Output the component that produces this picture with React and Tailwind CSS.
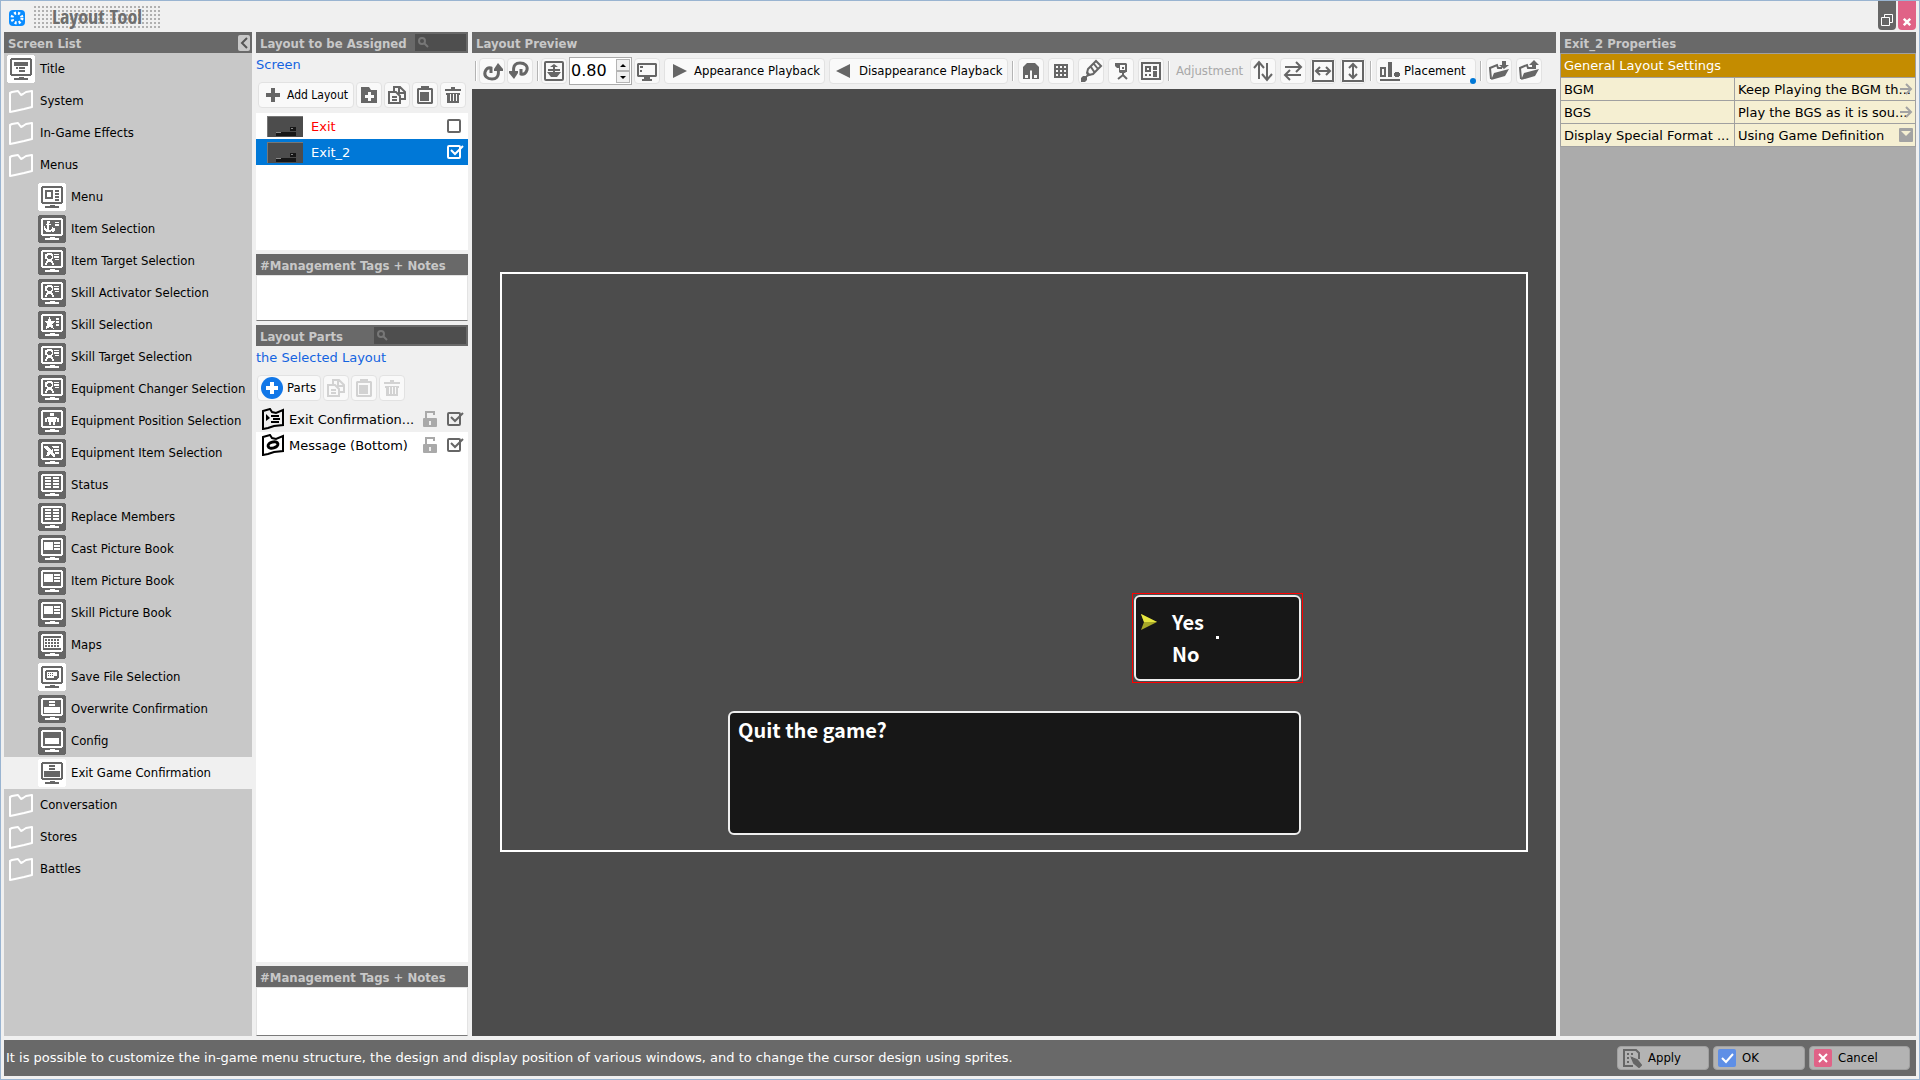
import React, { useState } from "react";

const SCREENS = [
  { name: "Title", kind: "title", light: true },
  { name: "System" },
  { name: "In-Game Effects" },
  { name: "Menus" },
  { name: "Menu", kind: "menu", light: true, child: true },
  { name: "Item Selection", kind: "anchor", child: true },
  { name: "Item Target Selection", kind: "person", child: true },
  { name: "Skill Activator Selection", kind: "person", child: true },
  { name: "Skill Selection", kind: "star", child: true },
  { name: "Skill Target Selection", kind: "person", child: true },
  { name: "Equipment Changer Selection", kind: "person", child: true },
  { name: "Equipment Position Selection", kind: "body", child: true },
  { name: "Equipment Item Selection", kind: "sword", child: true },
  { name: "Status", kind: "columns", child: true },
  { name: "Replace Members", kind: "columns", child: true },
  { name: "Cast Picture Book", kind: "book", child: true },
  { name: "Item Picture Book", kind: "book", child: true },
  { name: "Skill Picture Book", kind: "book", child: true },
  { name: "Maps", kind: "map", child: true },
  { name: "Save File Selection", kind: "save", light: true, child: true },
  { name: "Overwrite Confirmation", kind: "confirm", child: true },
  { name: "Config", kind: "config", child: true },
  { name: "Exit Game Confirmation", kind: "confirm", light: true, child: true },
  { name: "Conversation" },
  { name: "Stores" },
  { name: "Battles" },
];

// Drawings shown inside the monitor, on a 28x28 grid
const GLYPHS = {
  title: <path d="M7 7h14v4H7zM9 12h2v2H9zM12 12h6v2h-6zM12 15h6v2h-6z" />,
  menu: <path fillRule="evenodd" d="M7 7h8v9H7zM9 9v5h4V9zM17 7h4v2h-4zM17 10h4v2h-4zM17 13h4v2h-4zM17 16h4v2h-4z" />,
  anchor: <path d="M9 6h3v2h-1v1h2v1h-2v5h2v-1h1v-2h1v1h2v3h-1v1h-2v-1h-1v1H8v-1H7v-1H6v-4h1v2h1v1h1v-4H8V9h1zM17 7h4v1h-4zM17 9h4v2h-4z" />,
  person: <path fillRule="evenodd" d="M9 6h5v1h1v5h-1v2h1v2h1v2h-2v-2h-1v-1h-3v1H9v2H7v-2h1v-2h1v-2H7V7h2zM10 8v1H9v2h1v1h3v-1h1V9h-1V8zM16 7h5v1h-5zM16 9h5v2h-5zM17 12h4v1h-4z" />,
  star: <path d="M11 6h1l1 4h4l-3 3 2 5-4-2-4 2 1-5-3-3h4zM18 7h3v2h-3zM18 10h3v2h-3zM18 13h3v2h-3z" />,
  body: <path d="M12 6h4v3h-4zM9 10h10v1h2v4h-2v-3h-1v3h-8v-3H9v3H7v-4h2zM11 15h2v3h-2zM15 15h2v3h-2z" />,
  sword: <path d="M6 7h3l4 4 2-1v2l-1 1 3 3v2h-2l-3-3-2 2H8l1-2-1-1 2-1-4-4zM14 7h7v2h-6zM16 10h5v2h-5zM17 13h4v2h-4z" />,
  columns: <path d="M7 6h6v2H7zM7 9h6v2H7zM7 12h6v2H7zM7 15h6v2H7zM15 6h6v2h-6zM15 9h6v2h-6zM15 12h6v2h-6zM15 15h6v2h-6z" />,
  book: <path d="M6 7h9v8H6zM16 7h6v2h-6zM16 10h6v2h-6zM16 13h6v2h-6z" />,
  map: <path fillRule="evenodd" d="M6 7h17v10H6zM7 8v2h2V8zM10 8v2h2V8zM13 8v2h2V8zM16 8v2h2V8zM19 8v2h2V8zM7 11v2h2v-2zM10 11v2h2v-2zM13 11v2h2v-2zM16 11v2h2v-2zM19 11v2h2v-2zM7 14v2h2v-2zM10 14v2h2v-2zM13 14v2h2v-2zM16 14v2h2v-2zM19 14v2h2v-2z" />,
  save: <path fillRule="evenodd" d="M8 7h12v1h1v6l-3 3H8v-1H7V8h1zM9 9v6h7v-2h3V9zM10 10h1v1h-1zM12 10h1v1h-1zM14 10h1v1h-1zM10 12h1v1h-1zM12 12h1v1h-1zM14 12h1v1h-1z" />,
  confirm: <path d="M11 6h6v2h-6zM11 9h6v2h-6zM6 12h16v6H6z" />,
  config: <path d="M7 11h14v6H7z" />,
};

function MonitorIcon({ kind, light }) {
  return (
    <svg viewBox="0 0 28 28" className="size-7 shrink-0" shapeRendering="crispEdges" aria-hidden="true">
      <rect width="28" height="28" rx="3" fill={light ? "#fff" : "#666"} />
      <g fill={light ? "#666" : "#fff"}>
        <path fillRule="evenodd" d="M4 3h20v1h1v16h-1v1H4v-1H3V4h1zM5 5v14h18V5zM12 22h5v1h4v2H7v-2h5z" />
        {GLYPHS[kind]}
      </g>
    </svg>
  );
}

function FolderIcon() {
  return (
    <svg viewBox="0 0 28 28" className="size-7 shrink-0" aria-hidden="true">
      <path d="M3 6l2-1 6-1 3 4 2-1 3-2 6-1v16l-8 2-9 2-5 1z" fill="none" stroke="#fff" strokeWidth="2" strokeLinejoin="round" />
    </svg>
  );
}

// Toolbar icons, all on a 24x24 grid
const ICONS = {
  plus: <path d="M10 5h4v5h5v4h-5v5h-4v-5H5v-4h5z" />,
  addFolder: <path fillRule="evenodd" d="M4 4h8l2 3h6v13H4zM11 9v3H8v3h3v3h3v-3h3v-3h-3V9z" />,
  copy: (
    <g fill="none" stroke="currentColor" strokeWidth="2">
      <path d="M9 8V4h6l5 5v7h-4M14 4v6h6" />
      <path d="M4 9h7l4 4v7H4zM7 14h5M7 17h5" />
    </g>
  ),
  paste: <path fillRule="evenodd" d="M8 3h8v2h3l1 1v14l-1 1H5l-1-1V6l1-1h3zM6 7v12h12V7zM8 9h8v9H7V9z" />,
  trash: <path fillRule="evenodd" d="M10 4h4v2h6v2H4V6h6zM5 10h14v2h-1v8H6v-8H5zM9 11v7h1v-7zM12 11v7h1v-7zM15 11v7h1v-7z" />,
  redo: (
    <g>
      <path d="M18 9C20 19 15 20 12 20 7 20 4 17 5 13c1-3 3-5 6-4v5" fill="none" stroke="currentColor" strokeWidth="3" />
      <path d="M18 4l5 6v2h-9v-2z" />
    </g>
  ),
  undo: (
    <g transform="rotate(180 12 12)">
      <path d="M18 9C20 19 15 20 12 20 7 20 4 17 5 13c1-3 3-5 6-4v5" fill="none" stroke="currentColor" strokeWidth="3" />
      <path d="M18 4l5 6v2h-9v-2z" />
    </g>
  ),
  anchorBox: (
    <g>
      <rect x="3" y="3" width="18" height="18" rx="1" fill="none" stroke="currentColor" strokeWidth="2" />
      <path d="M12 5l4 3h-3v2h5v2h-5v1h6l-4 5h-6l-4-5h6v-1H6v-2h5V8H8z" />
    </g>
  ),
  screen: <path fillRule="evenodd" d="M3 4h18l1 1v12l-1 1h-6v2h2v2H7v-2h2v-2H3l-1-1V5zM4 6v10h16V6zM5 7h3v2H5zM5 11h2v2H5z" />,
  right: <path d="M5 5l14 7-14 7z" />,
  left: <path d="M19 5v14L5 12z" />,
  magnet: <path fillRule="evenodd" d="M8 4h8l4 4v12h-7v-8l-1-1-1 1v8H4V8zM6 16v3h3v-3zM15 16v3h3v-3z" />,
  grid: <path fillRule="evenodd" d="M5 5h14v14H5zM7 7v2h2V7zM11 7v2h2V7zM15 7v2h2V7zM7 11v2h2v-2zM11 11v2h2v-2zM15 11v2h2v-2zM7 15v2h2v-2zM11 15v2h2v-2zM15 15v2h2v-2z" />,
  brush: (
    <g>
      <path d="M8 14l1-4 8-8 5 5-8 8-4 1zM12 8l4 6M15 5l4 5" fill="none" stroke="currentColor" strokeWidth="2" />
      <path d="M9 13l3 3-4 2v3l-2 2H2v-4l2-2h3z" />
    </g>
  ),
  camera: (
    <g>
      <path fillRule="evenodd" d="M6 4h11l1 1v8h-1l-1 1h-5l-1-1V9H8L6 7zM11 6v5h5V6zM13 8h2v2h-2z" />
      <path d="M14 14v2M9 20l5-4 4 4" fill="none" stroke="currentColor" strokeWidth="2" />
    </g>
  ),
  layout: <path fillRule="evenodd" d="M2 3h20v18H2zM4 5v14h16V5zM6 7h6v6H6zM8 9v2h2V9zM14 7h4v4h-4zM14 12h4v6h-4zM6 15h2v2H6zM10 15h2v2h-2z" />,
  upDown: <path d="M3 9l5-6 5 6M8 4v16M11 15l5 6 5-6M16 4v16" fill="none" stroke="currentColor" strokeWidth="2" />,
  leftRight: <path d="M4 8h16M15 3l5 5-5 5M20 16H4M9 11l-5 5 5 5" fill="none" stroke="currentColor" strokeWidth="2" />,
  width: <path d="M2 2h20v20H2zM5 12h14M9 8l-4 4 4 4M15 8l4 4-4 4" fill="none" stroke="currentColor" strokeWidth="2" />,
  height: <path d="M2 2h20v20H2zM12 5v14M8 9l4-4 4 4M8 15l4 4 4-4" fill="none" stroke="currentColor" strokeWidth="2" />,
  bars: <path fillRule="evenodd" d="M2 8h6v10H2zM4 10v6h2v-6zM10 3h4v15h-4zM17 13h4v1h1v3h-1v1h-4v-1h-1v-3h1zM2 20h20v2H2z" />,
  folderIn: (
    <g>
      <path d="M4 20L3 9l7-3 1 3h4" fill="none" stroke="currentColor" strokeWidth="2" />
      <path d="M4 21l3-7 15-4-4 7zM15 2h4v4h3l-5 4-5-4h3z" />
    </g>
  ),
  folderOut: (
    <g>
      <path d="M4 20L3 9l7-3 1 3h4" fill="none" stroke="currentColor" strokeWidth="2" />
      <path d="M4 21l3-7 15-4-4 7zM15 10h4V6h3l-5-5-5 5h3z" />
    </g>
  ),
};

function Icon({ name }) {
  return (
    <svg viewBox="0 0 24 24" className="size-6 shrink-0" fill="currentColor" aria-hidden="true">
      {ICONS[name]}
    </svg>
  );
}

function ToolButton({ icon, label, disabled }) {
  return (
    <button
      aria-label={label}
      disabled={disabled}
      className="flex size-[26px] shrink-0 items-center justify-center rounded border border-[#e2e2e2] bg-[#f9f9f9] text-[#666] disabled:text-[#d2d2d2]"
    >
      <Icon name={icon} />
    </button>
  );
}

function Separator() {
  return <div className="h-5 w-0.5 shrink-0 border-r border-l border-r-white border-l-[#b4b4b4]" />;
}

function PanelHeader({ title, children }) {
  return (
    <div className="flex h-[21px] shrink-0 items-center justify-between bg-[#696969] pl-1 font-['DejaVu_Sans_Condensed','DejaVu_Sans',sans-serif] text-[13px] font-bold whitespace-nowrap text-[#c8c8c8]">
      <h2 className="pt-0.5">{title}</h2>
      {children}
    </div>
  );
}

function SearchBox({ label, className }) {
  return (
    <label className={`mr-0.5 flex h-[17px] bg-[#4e4e4e] ${className}`}>
      <svg viewBox="0 0 12 12" className="mt-0.5 ml-0.5 size-3 shrink-0" fill="none" stroke="#777" strokeWidth="2" aria-hidden="true">
        <circle cx="5" cy="5" r="3" />
        <path d="M7 7l4 4" />
      </svg>
      <input type="text" aria-label={label} className="w-full min-w-0 bg-transparent px-1 text-xs text-white outline-none" />
    </label>
  );
}

function Check({ label, checked, onChange, light }) {
  return (
    <label className={`relative size-[18px] shrink-0 ${light ? "text-white" : "text-[#666]"}`}>
      <input type="checkbox" aria-label={label} checked={checked} onChange={onChange} className="absolute inset-0 appearance-none" />
      <svg viewBox="0 0 18 18" className="size-[18px]" fill="none" stroke="currentColor" strokeWidth="2" aria-hidden="true">
        <rect x="2" y="3" width="12" height="12" rx="1" />
        {checked && <path d="M5 7l4 4 8-8" stroke={light ? "#fff" : "#666"} />}
      </svg>
    </label>
  );
}

function Lock() {
  return (
    <svg viewBox="0 0 16 18" className="h-[18px] w-4 shrink-0" aria-hidden="true">
      <path d="M4 8V2h8v3" fill="none" stroke="#a9a9a9" strokeWidth="2" />
      <rect x="1" y="8" width="14" height="9" rx="1" fill="#a9a9a9" />
      <path d="M7 11h2v4H7z" fill="#eee" />
    </svg>
  );
}

function Notes({ label, className }) {
  return (
    <>
      <PanelHeader title="#Management Tags + Notes" />
      <textarea
        aria-label={label}
        className={`block w-full resize-none border border-[#e3e3e3] border-b-[#7a7a7a] bg-white px-1 text-[13px] outline-none ${className}`}
      />
    </>
  );
}

function ScreenList() {
  const [active, setActive] = useState("Exit Game Confirmation");
  return (
    <aside className="flex w-[248px] shrink-0 flex-col bg-[#c8c8c8]">
      <PanelHeader title="Screen List">
        <button aria-label="Collapse" className="mr-0.5 flex h-4 w-3 items-center justify-center rounded-xs bg-[#c8c8c8]">
          <svg viewBox="0 0 12 16" className="h-4 w-3" fill="none" stroke="#555" strokeWidth="2">
            <path d="M9 3L4 8l5 5" />
          </svg>
        </button>
      </PanelHeader>
      <ul>
        {SCREENS.map((s) => (
          <li key={s.name}>
            <button
              onClick={() => setActive(s.name)}
              className={`flex h-8 w-full items-center gap-[5px] text-left font-['DejaVu_Sans_Condensed','DejaVu_Sans',sans-serif] text-[13px] whitespace-nowrap ${s.child ? "pl-[34px]" : "pl-[3px]"} ${active === s.name ? "bg-[#f0f0f0]" : ""}`}
            >
              {s.kind ? <MonitorIcon kind={s.kind} light={s.light} /> : <FolderIcon />}
              <span>{s.name}</span>
            </button>
          </li>
        ))}
      </ul>
    </aside>
  );
}

function Thumb() {
  return (
    <svg viewBox="0 0 36 21" className="h-[21px] w-9 shrink-0" shapeRendering="crispEdges" aria-hidden="true">
      <path fill="#4c4c4c" stroke="#777" d="M0 0h36v21H0z" />
      <path fill="#171717" d="M9 16h20v4H9zM23 11h6v4h-6z" />
      <path fill="#888" d="M9 16h5v1H9zM24 12h2v1h-2z" />
    </svg>
  );
}

function LayoutColumn() {
  const [layouts, setLayouts] = useState([
    { name: "Exit", on: false },
    { name: "Exit_2", on: true },
  ]);
  const [parts, setParts] = useState([
    { name: "Exit Confirmation...", on: true },
    { name: "Message (Bottom)", on: true },
  ]);
  const flip = (set, idx) => set((list) => list.map((l, i) => (i === idx ? { ...l, on: !l.on } : l)));

  return (
    <section className="flex w-[212px] shrink-0 flex-col">
      <PanelHeader title="Layout to be Assigned">
        <SearchBox label="Search layouts" className="w-[51px]" />
      </PanelHeader>
      <p className="h-[26px] text-[13px] leading-6 text-[#1464e0]">Screen</p>
      <div className="flex h-[34px] gap-0.5 px-0.5 pt-[3px] font-['DejaVu_Sans_Condensed','DejaVu_Sans',sans-serif]">
        <button className="flex h-[26px] w-24 items-center gap-0.5 rounded border border-[#e2e2e2] bg-[#f9f9f9] pl-0.5 text-xs whitespace-nowrap">
          <span className="text-[#666]"><Icon name="plus" /></span>
          Add Layout
        </button>
        <ToolButton icon="addFolder" label="Add folder" />
        <ToolButton icon="copy" label="Copy layout" />
        <ToolButton icon="paste" label="Paste layout" />
        <ToolButton icon="trash" label="Delete layout" />
      </div>
      <ul className="h-[137px] bg-white">
        {layouts.map((l, i) => (
          <li key={l.name} className={`flex h-[26px] items-center gap-2 pr-1 pl-[11px] text-[13px] ${i === 1 ? "bg-[#0078d7] text-white" : "text-[#f00]"}`}>
            <Thumb />
            <span className="grow pt-0.5">{l.name}</span>
            <Check label={`Use ${l.name}`} light={i === 1} checked={l.on} onChange={() => flip(setLayouts, i)} />
          </li>
        ))}
      </ul>
      <div className="mt-1">
        <Notes label="Layout notes" className="h-[46px]" />
      </div>

      <div className="mt-1">
        <PanelHeader title="Layout Parts">
          <SearchBox label="Search parts" className="w-[92px]" />
        </PanelHeader>
      </div>
      <p className="h-[26px] text-[13px] leading-6 whitespace-nowrap text-[#1464e0]">the Selected Layout</p>
      <div className="flex h-[34px] gap-0.5 px-px pt-[3px] font-['DejaVu_Sans_Condensed','DejaVu_Sans',sans-serif]">
        <button className="flex h-[26px] w-16 items-center gap-1 rounded border border-[#e2e2e2] bg-[#f9f9f9] pl-[3px] text-[13px]">
          <svg viewBox="0 0 22 22" className="size-[22px]" aria-hidden="true">
            <circle cx="11" cy="11" r="11" fill="#1177e8" />
            <path d="M9 5h4v4h4v4h-4v4H9v-4H5V9h4z" fill="#fff" />
          </svg>
          Parts
        </button>
        <ToolButton icon="copy" label="Copy part" disabled />
        <ToolButton icon="paste" label="Paste part" disabled />
        <ToolButton icon="trash" label="Delete part" disabled />
      </div>
      <ul className="grow bg-white">
        {parts.map((p, i) => (
          <li key={p.name} className={`flex h-[26px] items-center pr-1 pl-[5px] text-[13px] whitespace-nowrap ${i === 0 ? "bg-[#f0f0f0]" : ""}`}>
            <svg viewBox="0 0 24 22" className="mr-1 h-[22px] w-6 shrink-0" fill="none" stroke="#000" strokeWidth="2" aria-hidden="true">
              <path d="M2 3l7-2 2 3 4 1 7-3v15l-9 1-6 2-5 1z" />
              {i === 0 ? (
                <>
                  <path d="M10 8h8M12 11h7M10 14h8" />
                  <path d="M5 6l4 4-4 3z" fill="#000" stroke="none" />
                </>
              ) : (
                <ellipse cx="12" cy="11" rx="5" ry="3" strokeWidth="3" transform="rotate(-15 12 11)" />
              )}
            </svg>
            <span className="grow pt-0.5">{p.name}</span>
            <span className="mr-2"><Lock /></span>
            <Check label={`Show ${p.name}`} checked={p.on} onChange={() => flip(setParts, i)} />
          </li>
        ))}
      </ul>
      <div className="mt-1">
        <Notes label="Part notes" className="h-[49px]" />
      </div>
    </section>
  );
}

function PreviewToolbar() {
  const [zoom, setZoom] = useState("0.80");
  const step = (n) => setZoom((z) => (Number(z) + n).toFixed(2));
  const wide = "flex h-[26px] shrink-0 items-center rounded border border-[#e2e2e2] bg-[#f9f9f9] text-[13px] whitespace-nowrap";

  return (
    <div className="flex h-9 items-center gap-1 pl-[3px] font-['DejaVu_Sans_Condensed','DejaVu_Sans',sans-serif] text-[13px]">
      <div className="flex items-center gap-0.5">
        <Separator />
        <ToolButton icon="redo" label="Redo" />
        <ToolButton icon="undo" label="Undo" />
      </div>
      <div className="flex items-center gap-0.5">
        <Separator />
        <ToolButton icon="anchorBox" label="Fit" />
        <div className="flex h-7 w-[63px] shrink-0 border border-[#aaa] bg-white p-px">
          <input
            aria-label="Zoom"
            value={zoom}
            onChange={(e) => setZoom(e.target.value)}
            className="w-full min-w-0 font-['DejaVu_Sans',sans-serif] text-base outline-none"
          />
          <div className="flex w-3.5 shrink-0 flex-col">
            <button aria-label="Zoom in" onClick={() => step(0.05)} className="flex grow items-center justify-center border border-[#b4b4b4] bg-[#f0f0f0]">
              <svg viewBox="0 0 6 3" className="h-[3px] w-1.5"><path d="M0 3h6L3 0z" /></svg>
            </button>
            <button aria-label="Zoom out" onClick={() => step(-0.05)} className="flex grow items-center justify-center border border-[#b4b4b4] bg-[#f0f0f0]">
              <svg viewBox="0 0 6 3" className="h-[3px] w-1.5"><path d="M0 0h6L3 3z" /></svg>
            </button>
          </div>
        </div>
        <ToolButton icon="screen" label="Screen size" />
      </div>
      <button className={`${wide} w-[161px] gap-0.5 pl-[3px]`}>
        <span className="text-[#666]"><Icon name="right" /></span>
        Appearance Playback
      </button>
      <button className={`${wide} w-[179px] gap-1 pl-px`}>
        <span className="text-[#666]"><Icon name="left" /></span>
        Disappearance Playback
      </button>
      <Separator />
      <ToolButton icon="magnet" label="Snap" />
      <ToolButton icon="grid" label="Grid" />
      <ToolButton icon="brush" label="Brush" />
      <ToolButton icon="camera" label="Camera" />
      <ToolButton icon="layout" label="Layout" />
      <Separator />
      <span className="w-[72px] pl-0.5 text-[#a8a8a8]">Adjustment</span>
      <ToolButton icon="upDown" label="Swap vertically" />
      <ToolButton icon="leftRight" label="Swap horizontally" />
      <ToolButton icon="width" label="Match width" />
      <ToolButton icon="height" label="Match height" />
      <Separator />
      <button className={`${wide} relative w-[100px] gap-0.5 pl-px`}>
        <span className="text-[#666]"><Icon name="bars" /></span>
        Placement
        <span className="absolute -right-px -bottom-px size-1.5 rounded-full bg-[#0078d7]" />
      </button>
      <Separator />
      <ToolButton icon="folderIn" label="Import" />
      <ToolButton icon="folderOut" label="Export" />
    </div>
  );
}

function Preview() {
  return (
    <main className="flex min-w-0 grow flex-col">
      <PanelHeader title="Layout Preview" />
      <PreviewToolbar />
      <div className="flex grow items-center justify-center bg-[#4c4c4c] pb-0.5">
        {/* Game screen, windows are placed freely on it */}
        <div className="relative h-[580px] w-[1028px] shrink-0 border-2 border-white font-['Noto_Sans_CJK_JP',sans-serif] text-xl font-bold text-white">
          <div className="absolute top-[319px] left-[630px] h-[90px] w-[171px] border border-[#f00] p-px">
            <div className="flex h-full flex-col justify-center rounded-md border-2 border-[#eee] bg-[#171717] pl-9">
              <span className="leading-8">Yes</span>
              <span className="leading-8">No</span>
            </div>
            <svg viewBox="0 0 18 17" className="absolute top-5 left-[7px] h-[17px] w-[18px]" aria-hidden="true">
              <path d="M1 0l16 8-16 8 3-8z" fill="#a8a828" />
              <path d="M1 0l16 8H4z" fill="#e6e640" />
            </svg>
            <span className="absolute top-[42px] left-[83px] size-[3px] bg-white" />
          </div>
          <div className="absolute top-[437px] left-[226px] h-[124px] w-[573px] rounded-md border-2 border-[#eee] bg-[#171717] px-2 leading-[34px]">
            Quit the game?
          </div>
        </div>
      </div>
    </main>
  );
}

function Properties() {
  const cell = "border border-[#a0a0a0] px-[3px] text-left font-normal whitespace-nowrap";
  return (
    <aside className="flex w-[356px] shrink-0 flex-col bg-[#ababab]">
      <PanelHeader title="Exit_2 Properties" />
      <table className="w-full table-fixed border-collapse text-[13px] leading-5">
        <colgroup>
          <col className="w-[174px]" />
          <col />
        </colgroup>
        <thead>
          <tr>
            <th colSpan="2" className={`${cell} h-6 bg-[#c48c00] text-white`}>General Layout Settings</th>
          </tr>
        </thead>
        <tbody className="bg-[#f5efd2]">
          {[
            ["BGM", "Keep Playing the BGM th..."],
            ["BGS", "Play the BGS as it is sou..."],
            ["Display Special Format ...", "Using Game Definition"],
          ].map(([k, v], i) => (
            <tr key={k}>
              <th className={`${cell} h-[23px] pt-0.5`}>{k}</th>
              <td className={`${cell} relative h-[23px] pt-0.5`}>
                {v}
                <button aria-label={`Edit ${k}`} className="absolute inset-y-0 right-0.5 flex w-3.5 items-center">
                  {i < 2 ? (
                    <svg viewBox="0 0 14 14" className="size-3.5" fill="none" stroke="#a3a3a3" strokeWidth="2"><path d="M1 7h11M7 2l5 5-5 5" /></svg>
                  ) : (
                    <svg viewBox="0 0 14 14" className="size-3.5"><rect width="14" height="14" rx="1" fill="#a3a3a3" /><path d="M2 3h10L7 8z" fill="#f5efd2" /></svg>
                  )}
                </button>
              </td>
            </tr>
          ))}
        </tbody>
      </table>
    </aside>
  );
}

export default function App() {
  const action = "flex h-6 items-center gap-1.5 rounded border border-[#a0a0a0] bg-[#b3b3b3] pl-1";
  return (
    <div className="flex min-h-screen flex-col border border-[#99b4d1] bg-[#f0f0f0] px-[3px] font-['DejaVu_Sans',sans-serif] text-black">
      {/* Title bar */}
      <header className="flex h-[31px] shrink-0 items-start">
        <svg viewBox="0 0 18 18" className="mt-2 ml-1 size-[18px]" aria-hidden="true">
          <rect x="1" y="1" width="16" height="16" rx="4" fill="#0a8cff" />
          <circle cx="9" cy="9" r="5" fill="none" stroke="#fff" strokeWidth="3" strokeDasharray="2 2" />
        </svg>
        <h1 className="mt-[5px] ml-2 flex h-[22px] w-[126px] items-center justify-center bg-[conic-gradient(at_2px_2px,transparent_75%,#b0b0b0_0)] bg-size-[4px_4px] font-['Liberation_Sans_Narrow','Open_Sans_Condensed',sans-serif] text-xl font-black text-[#6e6e6e]">
          Layout Tool
        </h1>
        <div className="ml-auto flex gap-0.5">
          <button aria-label="Restore" className="flex h-[29px] w-[18px] items-end justify-center rounded-b bg-[#666] pb-1">
            <svg viewBox="0 0 12 12" className="size-3" fill="none" stroke="#fff"><path d="M3.500 3V.5h8v8H9M.5 3.500h8v8h-8z" /></svg>
          </button>
          <button aria-label="Close" className="flex h-[29px] w-[18px] items-end justify-center rounded-b bg-[#e06287] pb-1">
            <svg viewBox="0 0 10 10" className="size-2" stroke="#fff" strokeWidth="3"><path d="M1 1l8 8M9 1L1 9" /></svg>
          </button>
        </div>
      </header>

      <div className="flex grow gap-1">
        <ScreenList />
        <LayoutColumn />
        <Preview />
        <Properties />
      </div>

      {/* Status bar */}
      <footer className="my-1 mb-[3px] flex h-9 shrink-0 items-center justify-between bg-[#696969] pr-1.5 pl-0.5 text-[13px]">
        <p className="text-white">
          It is possible to customize the in-game menu structure, the design and display position of various windows, and to change the cursor design using sprites.
        </p>
        <div className="flex gap-1 font-['DejaVu_Sans_Condensed','DejaVu_Sans',sans-serif]">
          <button className={`${action} w-[92px]`}>
            <svg viewBox="0 0 20 20" className="size-5" fill="none" stroke="#666" strokeWidth="2" aria-hidden="true">
              <path d="M11 18H2V2h12l3 3v6M5 6h2M9 6h2M5 10h2M9 10h2M5 14h2" />
              <path d="M10 10l2 5 5 4 2-2-4-5z" fill="#666" />
            </svg>
            Apply
          </button>
          <button className={`${action} w-[92px]`}>
            <svg viewBox="0 0 18 18" className="size-[18px]" aria-hidden="true">
              <rect width="18" height="18" rx="2" fill="#5f8fe6" />
              <path d="M4 9l4 4 7-8" fill="none" stroke="#fff" strokeWidth="2" />
            </svg>
            OK
          </button>
          <button className={`${action} w-[101px]`}>
            <svg viewBox="0 0 18 18" className="size-[18px]" aria-hidden="true">
              <rect width="18" height="18" rx="2" fill="#e06287" />
              <path d="M5 5l8 8M13 5l-8 8" stroke="#fff" strokeWidth="2" />
            </svg>
            Cancel
          </button>
        </div>
      </footer>
    </div>
  );
}
